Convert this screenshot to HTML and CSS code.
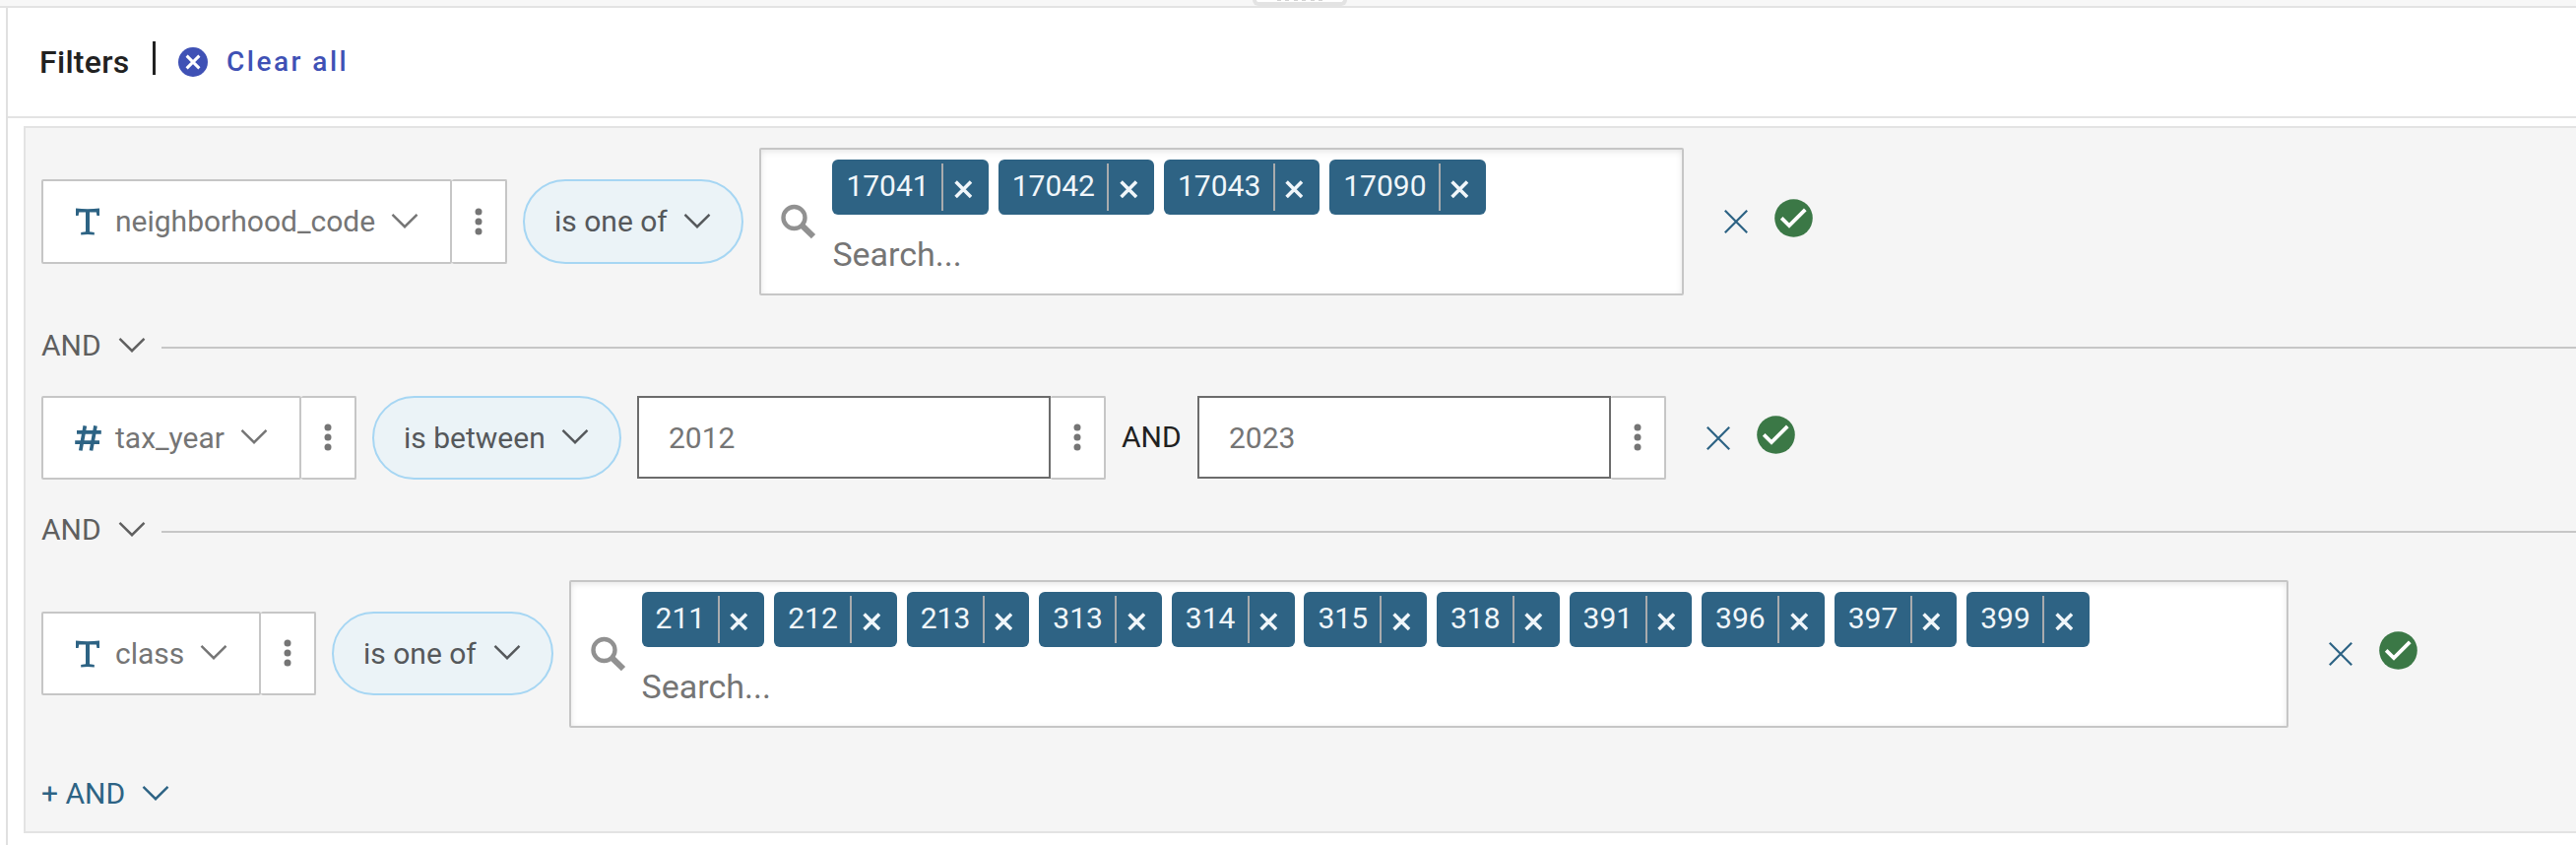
FILE: index.html
```html
<!DOCTYPE html>
<html lang="en">
<head>
<meta charset="utf-8">
<title>Filters</title>
<link rel="stylesheet" href="styles.css">
</head>
<body>
<svg class="defs" width="0" height="0">
  <symbol id="chevron" viewBox="0 0 28 16"><path d="M1.5 1.8 14 14.2 26.5 1.8" fill="none" stroke="currentColor" stroke-width="2.4"/></symbol>
  <symbol id="dots" viewBox="0 0 8 28"><circle cx="4" cy="4" r="3.5"/><circle cx="4" cy="14" r="3.5"/><circle cx="4" cy="24" r="3.5"/></symbol>
  <symbol id="type-text" viewBox="0 0 24 28"><path d="M0 .5Q12 2 24 .5V8H21.4L20.8 4.6H14V24.3L18.8 25V27.6Q12 26.6 5.2 27.6V25L10 24.3V4.6H3.2L2.6 8H0Z"/></symbol>
  <symbol id="type-number" viewBox="0 0 27 26"><path d="M10.3 .3 5.8 25.5M21 .3 16.5 25.5M2 6.9H26.8M.2 17.1H25" fill="none" stroke="currentColor" stroke-width="3.7"/></symbol>
  <symbol id="search" viewBox="0 0 36 36"><circle cx="13.5" cy="14" r="11" fill="none" stroke="currentColor" stroke-width="4.4"/><path d="M21 21.5 33 33.2" fill="none" stroke="currentColor" stroke-width="6"/></symbol>
  <symbol id="chip-x" viewBox="0 0 20 20"><path d="M1.7 1.7 18.3 18.3M18.3 1.7 1.7 18.3" stroke="currentColor" stroke-width="3.8"/></symbol>
  <symbol id="remove" viewBox="0 0 24 24"><path d="M.8 .8 23.2 23.2M23.2 .8 .8 23.2" stroke="currentColor" stroke-width="2.2"/></symbol>
  <symbol id="valid" viewBox="0 0 39 39"><circle cx="19.5" cy="19.5" r="19.3"/><path d="M7.2 19.4 15 27 31.3 10.8" fill="none" stroke="#fff" stroke-width="3.8"/></symbol>
  <symbol id="clear" viewBox="0 0 30 30"><circle cx="15" cy="15" r="15"/><path d="M8.6 8.6 21.4 21.4M21.4 8.6 8.6 21.4" stroke="#fff" stroke-width="3"/></symbol>
</svg>

<div class="topbar"><div class="handle"><i></i><i></i><i></i><i></i><i></i><i></i></div></div>
<main class="pane">
  <header class="header">
    <h1 class="title">Filters</h1>
    <span class="bar"></span>
    <button class="clear"><svg><use href="#clear"/></svg><span>Clear all</span></button>
  </header>

  <section class="panel">
    <div class="rule tall">
      <div class="field w-hood"><svg class="type"><use href="#type-text"/></svg><span>neighborhood_code</span><svg class="chev"><use href="#chevron"/></svg></div>
      <div class="more"><svg><use href="#dots"/></svg></div>
      <div class="op w-oneof"><span>is one of</span><svg class="chev"><use href="#chevron"/></svg></div>
      <div class="picker w-p1">
        <svg class="lens"><use href="#search"/></svg>
        <div class="values">
          <div class="chips">
            <span class="chip"><b>17041</b><svg><use href="#chip-x"/></svg></span>
            <span class="chip"><b>17042</b><svg><use href="#chip-x"/></svg></span>
            <span class="chip"><b>17043</b><svg><use href="#chip-x"/></svg></span>
            <span class="chip"><b>17090</b><svg><use href="#chip-x"/></svg></span>
          </div>
          <span class="search">Search...</span>
        </div>
      </div>
      <svg class="remove"><use href="#remove"/></svg><svg class="valid"><use href="#valid"/></svg>
    </div>

    <div class="join between"><span>AND</span><svg class="chev"><use href="#chevron"/></svg><span class="line"></span></div>

    <div class="rule short">
      <div class="field w-year"><svg class="type num"><use href="#type-number"/></svg><span>tax_year</span><svg class="chev"><use href="#chevron"/></svg></div>
      <div class="more"><svg><use href="#dots"/></svg></div>
      <div class="op w-between"><span>is between</span><svg class="chev"><use href="#chevron"/></svg></div>
      <div class="input">2012</div><div class="more"><svg><use href="#dots"/></svg></div>
      <span class="and">AND</span>
      <div class="input">2023</div><div class="more"><svg><use href="#dots"/></svg></div>
      <svg class="remove"><use href="#remove"/></svg><svg class="valid"><use href="#valid"/></svg>
    </div>

    <div class="join between"><span>AND</span><svg class="chev"><use href="#chevron"/></svg><span class="line"></span></div>

    <div class="rule tall low">
      <div class="field w-class"><svg class="type"><use href="#type-text"/></svg><span>class</span><svg class="chev"><use href="#chevron"/></svg></div>
      <div class="more"><svg><use href="#dots"/></svg></div>
      <div class="op w-oneof"><span>is one of</span><svg class="chev"><use href="#chevron"/></svg></div>
      <div class="picker w-p2">
        <svg class="lens"><use href="#search"/></svg>
        <div class="values">
          <div class="chips">
            <span class="chip"><b>211</b><svg><use href="#chip-x"/></svg></span>
            <span class="chip"><b>212</b><svg><use href="#chip-x"/></svg></span>
            <span class="chip"><b>213</b><svg><use href="#chip-x"/></svg></span>
            <span class="chip"><b>313</b><svg><use href="#chip-x"/></svg></span>
            <span class="chip"><b>314</b><svg><use href="#chip-x"/></svg></span>
            <span class="chip"><b>315</b><svg><use href="#chip-x"/></svg></span>
            <span class="chip"><b>318</b><svg><use href="#chip-x"/></svg></span>
            <span class="chip"><b>391</b><svg><use href="#chip-x"/></svg></span>
            <span class="chip"><b>396</b><svg><use href="#chip-x"/></svg></span>
            <span class="chip"><b>397</b><svg><use href="#chip-x"/></svg></span>
            <span class="chip"><b>399</b><svg><use href="#chip-x"/></svg></span>
          </div>
          <span class="search">Search...</span>
        </div>
      </div>
      <svg class="remove"><use href="#remove"/></svg><svg class="valid"><use href="#valid"/></svg>
    </div>

    <button class="join add"><span>+ AND</span><svg class="chev"><use href="#chevron"/></svg></button>
  </section>
</main>
</body>
</html>
```

FILE: styles.css
```css
* { box-sizing: border-box; }
body {
  margin: 0;
  height: 858px;
  overflow: hidden;
  background: #fff;
  color: #212121;
  font: 30px/36px Roboto, sans-serif;
}
svg { display: block; flex: none; fill: currentColor; overflow: visible; }
.defs { position: absolute; }
button { border: 0; padding: 0; background: none; font: inherit; }

.topbar {
  height: 8px;
  background: #f7f7f7;
  border-bottom: 2px solid #e3e3e3;
  overflow: hidden;
}
.handle {
  display: flex;
  justify-content: center;
  gap: 4.6px;
  width: 96px;
  height: 6px;
  margin-left: 1272px;
  background: #fff;
  border: 4px solid #e3e3e3;
  border-top: 0;
  border-radius: 0 0 12px 12px;
}
.handle i { width: 4px; height: 1px; background: #d2d2d2; }

.pane {
  height: 850px;
  margin-left: 6px;
  border-left: 2px solid #e0e0e0;
}
.header {
  display: flex;
  align-items: flex-start;
  height: 112px;
  padding-left: 32px;
  border-bottom: 2px solid #e3e3e3;
}
.title {
  width: 115px;
  margin: 36px 0 0;
  font-size: 32px;
  line-height: 38px;
  font-weight: 500;
  letter-spacing: .3px;
}
.bar { width: 3px; height: 34px; margin-top: 34px; background: #212121; }
.clear {
  display: flex;
  align-items: center;
  gap: 19px;
  margin: 40px 0 0 23px;
  color: #3f51b5;
  font-size: 28px;
  line-height: 30px;
  font-weight: 500;
  letter-spacing: 2.5px;
}
.clear svg { width: 30px; height: 30px; }

.panel {
  height: 718px;
  margin: 8px 0 0 16px;
  padding: 20px 0 0 16px;
  background: #f5f5f5;
  border: 2px solid #e3e3e3;
  border-right: 0;
}
.rule { display: flex; align-items: center; }
.tall { height: 150px; }
.short { height: 85px; }

.field, .more, .op { flex: none; display: flex; align-items: center; height: 86px; }
.short .field, .short .more, .short .op, .low .field, .low .more, .low .op { height: 85px; }
.low .field, .low .more, .low .op { margin-top: -1px; }
.field {
  justify-content: space-between;
  padding: 0 32px 0 33px;
  background: #fff;
  border: 2px solid #c6c6c6;
  border-radius: 2px;
  color: #757575;
}
.field span { flex: 1; padding-left: 16px; }
.type { width: 24px; height: 28px; color: #2d6384; }
.num { width: 27px; height: 26px; margin-left: -1.3px; margin-right: -1.7px; }
.chev { width: 28px; height: 16px; }
.field .chev, .op .chev { margin-top: -3px; }
.more {
  justify-content: center;
  width: 56px;
  padding-right: 1px;
  background: #fff;
  border: 2px solid #c6c6c6;
  border-left: 0;
  border-radius: 2px;
  color: #757575;
}
.more svg { width: 8px; height: 28px; margin-top: -1px; }
.op {
  justify-content: space-between;
  margin-left: 16px;
  padding: 0 31px 0 30px;
  background: #ebf3f7;
  border: 2px solid #a6d6f3;
  border-radius: 43px;
  color: #55585b;
}
.w-hood { width: 417px; }
.w-year { width: 264px; }
.w-class { width: 223px; }
.w-oneof { width: 224.4px; }
.low .w-oneof { width: 225px; }
.w-between { width: 253px; }
.w-p1 { width: 938.6px; }
.w-p2 { width: 1746px; }

.picker {
  flex: none;
  display: flex;
  height: 150px;
  margin-left: 16px;
  padding: 10px 0 0 20px;
  background: #fff;
  border: 2px solid #c6c6c6;
  border-radius: 2px;
  box-shadow: inset 0 2px 6px rgba(0, 0, 0, .1);
}
.lens { width: 36px; height: 36px; margin-top: 45px; color: #919191; }
.values { padding-left: 16px; }
.low .values { padding-left: 15.6px; }
.chips { display: flex; gap: 9.8px; }
.chip {
  display: flex;
  align-items: center;
  height: 56px;
  padding: 0 16.7px 0 14px;
  background: #2e6384;
  border-radius: 6px;
  color: #f0f6fa;
}
.chip b {
  height: 48px;
  padding-right: 12.4px;
  border-right: 2px solid #a9abad;
  font-weight: 400;
  line-height: 46px;
}
.chip svg { width: 18.6px; height: 18.6px; margin: 4px 0 0 10.5px; }
.search { display: block; margin-top: 20px; color: #757575; font-size: 34px; line-height: 40px; }

.remove { width: 24px; height: 24px; margin-left: 41px; color: #2d6384; }
.valid { width: 39px; height: 39px; margin: -7px 0 0 27px; color: #3b7846; }

.input {
  flex: none;
  align-self: flex-start;
  width: 420px;
  height: 84px;
  padding-left: 30px;
  background: #fff;
  border: 2px solid #6c6c6c;
  color: #757575;
  line-height: 81px;
}
.op + .input { margin-left: 16px; }
.and { width: 93px; margin-top: -2px; padding-left: 16px; }

.join { display: flex; align-items: center; height: 36px; color: #5f5f5f; }
.join span:first-child { width: 78px; }
.join .chev { margin-top: -3px; }
.line { flex: 1; height: 2px; margin: 4px 0 0 16px; background: #c6c6c6; }
.between { margin: 33px 0; }
.add { margin-top: 49px; color: #2d6384; }
.join.add span { width: 102px; text-align: left; }
```
